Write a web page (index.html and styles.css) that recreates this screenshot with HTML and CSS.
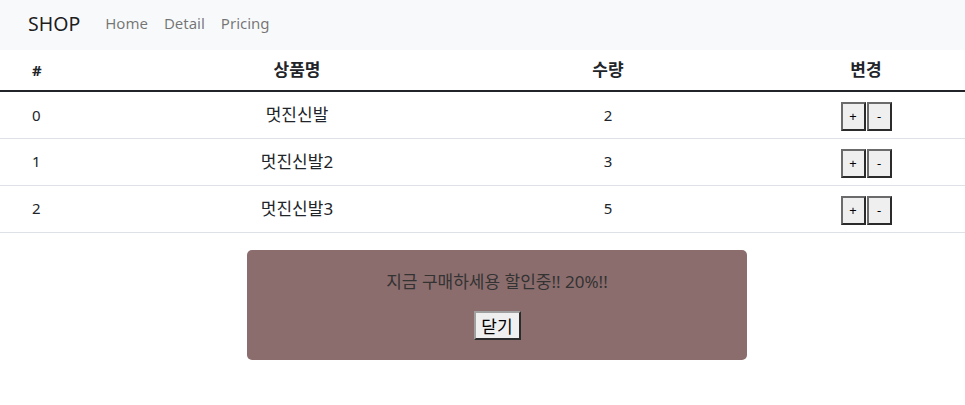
FILE: index.html
```html
<!DOCTYPE html>
<html lang="ko">
<head>
<meta charset="utf-8">
<link rel="stylesheet" href="styles.css">
</head>
<body>
<nav class="navbar">
  <span class="brand">SHOP</span>
  <a class="nav-link" href="#">Home</a>
  <a class="nav-link" href="#">Detail</a>
  <a class="nav-link" href="#">Pricing</a>
</nav>
<table class="cart">
  <colgroup>
    <col class="c1"><col class="c2"><col class="c3"><col class="c4">
  </colgroup>
  <thead>
    <tr><th class="idx">#</th><th>상품명</th><th>수량</th><th>변경</th></tr>
  </thead>
  <tbody>
    <tr><td class="idx">0</td><td>멋진신발</td><td>2</td><td><button class="qty">+</button><button class="qty">-</button></td></tr>
    <tr><td class="idx">1</td><td>멋진신발2</td><td>3</td><td><button class="qty">+</button><button class="qty">-</button></td></tr>
    <tr><td class="idx">2</td><td>멋진신발3</td><td>5</td><td><button class="qty">+</button><button class="qty">-</button></td></tr>
  </tbody>
</table>
<div class="alert">
  <p class="alert-text">지금 구매하세용 할인중!! 20%!!</p>
  <button class="close-btn">닫기</button>
</div>
</body>
</html>
```
FILE: styles.css
```css
* { box-sizing: border-box; }
body {
  margin: 0;
  font-family: "Noto Sans", "Noto Sans CJK KR", sans-serif;
  font-size: 16px;
  line-height: 1.5;
  color: #212529;
  background: #fff;
}
.navbar {
  height: 50px;
  background: #f8f9fa;
  display: flex;
  align-items: center;
  padding-left: 28px;
  padding-bottom: 3px;
}
.brand {
  font-size: 19.5px;
  color: rgba(0,0,0,0.9);
  margin-right: 25px;
}
.nav-link {
  color: rgba(0,0,0,0.55);
  text-decoration: none;
  font-size: 15px;
  margin-right: 16px;
}
.cart {
  width: 100%;
  border-collapse: collapse;
  table-layout: fixed;
  margin-bottom: 17px;
}
.c1 { width: 145px; }
.c2 { width: 304px; }
.c3 { width: 318px; }
.c4 { width: 198px; }
.cart th, .cart td {
  text-align: center;
  vertical-align: middle;
  font-size: 15px;
  padding: 0 8px;
}
.cart th {
  height: 41px;
  font-weight: 700;
  border-bottom: 2px solid #212529;
}
.cart td {
  height: 47px;
  border-bottom: 1px solid #dee2e6;
}
.cart td:nth-child(2), .cart th:nth-child(2),
.cart th:nth-child(3), .cart th:nth-child(4) {
  font-size: 17px;
}
.cart .idx {
  text-align: left;
  padding-left: 32px;
}
.qty {
  width: 25px;
  height: 29px;
  margin: 3px 0 0 0;
  padding: 0;
  font-family: "Noto Sans", sans-serif;
  font-size: 13px;
  color: #000;
  background: #efefef;
  border: 2px solid;
  border-color: #6b6b6b #2b2b2b #2b2b2b #6b6b6b;
  vertical-align: middle;
}
.qty + .qty { margin-left: 1px; }
.alert {
  width: 500px;
  height: 110px;
  margin-left: 247px;
  background: #8c6d6d;
  border-radius: 5px;
  padding-top: 20px;
  text-align: center;
}
.alert-text {
  margin: 0 0 17px;
  font-size: 17px;
  line-height: 24px;
  color: #333;
}
.close-btn {
  width: 47px;
  height: 29px;
  padding: 0;
  font-family: "Noto Sans CJK KR", sans-serif;
  font-size: 17px;
  color: #000;
  background: #efefef;
  border: 2px solid;
  border-color: #a0a0a0 #2b2b2b #2b2b2b #a0a0a0;
  vertical-align: top;
}
```
